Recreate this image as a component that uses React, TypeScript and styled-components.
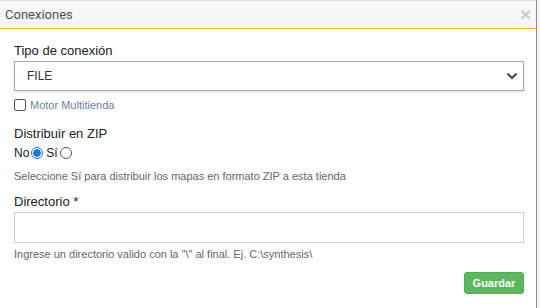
import React from "react";
import styled, { createGlobalStyle } from "styled-components";

const Global = createGlobalStyle`
  html, body { margin: 0; padding: 0; background: #f2f2f2; }
  body { font-family: "Liberation Sans", Arial, sans-serif; width: 540px; height: 308px; overflow: hidden; }
`;

const Page = styled.div`
  display: flex;
  width: 540px;
  height: 308px;
`;

const Modal = styled.div`
  width: 537px;
  height: 308px;
  background: #fff;
  border-right: 1px solid #8c8c8c;
  box-sizing: border-box;
  display: flex;
  flex-direction: column;
`;

const Header = styled.div`
  height: 29px;
  box-sizing: border-box;
  background: #f7f7f7;
  border-top: 1px solid #e2e2e2;
  border-bottom: 1px solid #f5b400;
  display: flex;
  align-items: center;
  justify-content: space-between;
  padding: 0 5px 0 5px;
`;

const Title = styled.span`
  font-family: Roboto, "Liberation Sans", sans-serif;
  font-size: 13px;
  color: #48505c;
`;

const Close = styled.span`
  font-family: "Liberation Sans", Arial, sans-serif;
  font-size: 19px;
  font-weight: bold;
  color: #cdcad6;
  line-height: 1;
  margin-top: -1px;
`;

const Body = styled.div`
  padding: 14px 12px 0 14px;
  display: flex;
  flex-direction: column;
`;

const Label = styled.label<{ $top?: number }>`
  font-size: 13px;
  line-height: 15px;
  color: #222;
  margin-top: ${(p) => p.$top ?? 0}px;
  margin-bottom: 3px;
`;

const SelectBox = styled.div`
  height: 30px;
  box-sizing: border-box;
  border: 1px solid #a9a9a9;
  box-shadow: 0 1px 3px rgba(0, 0, 0, 0.12);
  display: flex;
  align-items: center;
  justify-content: space-between;
  padding: 0 5px 0 12px;
  font-size: 12px;
  color: #333;
`;

const Input = styled.div`
  height: 31px;
  box-sizing: border-box;
  border: 1px solid #cfcfcf;
  background: #fff;
`;

const CheckRow = styled.div`
  display: flex;
  align-items: center;
  margin-top: 8px;
  gap: 2px;
  font-size: 11px;
  color: #6b7f9e;
`;

const Box = styled.span`
  width: 10px;
  height: 10px;
  border: 1px solid #555;
  border-radius: 2px;
  background: #fff;
  margin-right: 2px;
`;

const RadioRow = styled.div`
  display: flex;
  align-items: center;
  font-size: 12px;
  color: #222;
  margin-top: 1px;
  height: 16px;
`;

const Radio = styled.span<{ $on?: boolean }>`
  width: 10px;
  height: 10px;
  border-radius: 50%;
  border: 1px solid ${(p) => (p.$on ? "#1a73e8" : "#555")};
  background: ${(p) => (p.$on ? "radial-gradient(circle, #1a73e8 0 3.5px, #fff 4px)" : "#fff")};
  margin: 0 3px 0 2px;
`;

const Help = styled.div<{ $top: number }>`
  font-size: 11px;
  color: #666;
  margin-top: ${(p) => p.$top}px;
  line-height: 13px;
`;

const Footer = styled.div`
  display: flex;
  justify-content: flex-end;
  margin-top: 11px;
`;

const Button = styled.button`
  height: 22px;
  width: 60px;
  box-sizing: border-box;
  background: #5cb85c;
  border: 1px solid #4cae4c;
  border-radius: 3px;
  color: #fff;
  font-family: "Liberation Sans", Arial, sans-serif;
  font-size: 11px;
  font-weight: bold;
  padding: 0;
`;

export default function App() {
  return (
    <Page>
      <Global />
      <Modal>
        <Header>
          <Title>Conexiones</Title>
          <Close>×</Close>
        </Header>
        <Body>
          <Label>Tipo de conexión</Label>
          <SelectBox>
            <span>FILE</span>
            <svg width="12" height="8" viewBox="0 0 12 8">
              <path d="M1.5 1.5 L6 6 L10.5 1.5" fill="none" stroke="#444" strokeWidth="2" />
            </svg>
          </SelectBox>
          <CheckRow>
            <Box />
            <span>Motor Multitienda</span>
          </CheckRow>
          <Label $top={15}>Distribuir en ZIP</Label>
          <RadioRow>
            <span>No</span>
            <Radio $on />
            <span>Sí</span>
            <Radio />
          </RadioRow>
          <Help $top={9}>Seleccione Sí para distribuir los mapas en formato ZIP a esta tienda</Help>
          <Label $top={11}>Directorio *</Label>
          <Input />
          <Help $top={5}>Ingrese un directorio valido con la "\" al final. Ej. C:\synthesis\</Help>
          <Footer>
            <Button>Guardar</Button>
          </Footer>
        </Body>
      </Modal>
    </Page>
  );
}
